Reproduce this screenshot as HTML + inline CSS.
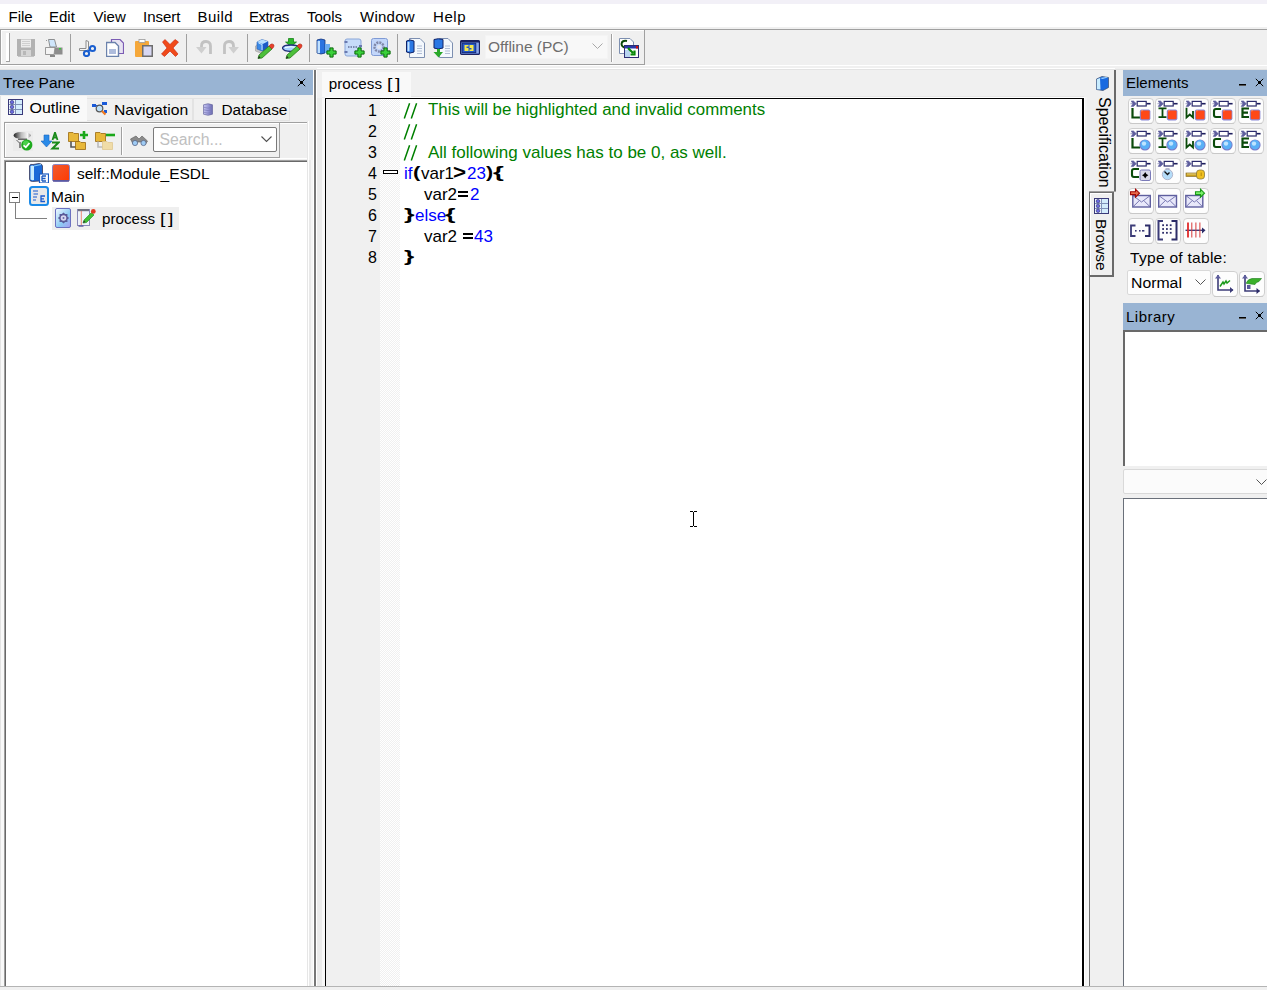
<!DOCTYPE html>
<html><head><meta charset="utf-8">
<style>
html,body{margin:0;padding:0;}
body{width:1267px;height:990px;overflow:hidden;position:relative;background:#f0f0f0;font-family:"Liberation Sans",sans-serif;color:#000;}
.a{position:absolute;}
.t{position:absolute;white-space:pre;line-height:1;}
.ln{left:337px;width:40px;text-align:right;font-size:16px}
.cd{font-size:17px}
.b{font-size:17px;font-weight:bold;transform-origin:0 0}
.hdr{position:absolute;background:#99b4d3;}
</style></head><body>
<!-- top strip -->
<div class="a" style="left:0;top:0;width:1267px;height:4px;background:#f2f0f7"></div>
<!-- menubar -->
<div class="a" style="left:0;top:4px;width:1267px;height:23px;background:#fff"></div>
<div class="t" style="left:8.5px;top:9px;font-size:15px">File</div>
<div class="t" style="left:49px;top:9px;font-size:15px">Edit</div>
<div class="t" style="left:93.5px;top:9px;font-size:15px">View</div>
<div class="t" style="left:143px;top:9px;font-size:15px">Insert</div>
<div class="t" style="left:197.5px;top:9px;font-size:15px;letter-spacing:0.45px">Build</div>
<div class="t" style="left:249px;top:9px;font-size:15px;letter-spacing:-0.45px">Extras</div>
<div class="t" style="left:307px;top:9px;font-size:15px">Tools</div>
<div class="t" style="left:360px;top:9px;font-size:15px;letter-spacing:0.25px">Window</div>
<div class="t" style="left:433px;top:9px;font-size:15px;letter-spacing:0.55px">Help</div>

<!-- toolbar row -->
<div class="a" style="left:0;top:29px;width:1267px;height:1px;background:#a0a0a0"></div>
<div class="a" style="left:0;top:65px;width:1267px;height:1px;background:#fff"></div>
<div class="a" style="left:0;top:69px;width:1267px;height:1px;background:#e3e3e3"></div>
<div class="a" style="left:0;top:29px;width:643px;height:34px;border:1px solid #a0a0a0;border-top-color:#a0a0a0;background:#f0f0f0;box-shadow:inset 1px 1px 0 #fff"></div>
<div class="a" style="left:6px;top:33px;width:3px;height:28px;background:#fff;border-right:1px solid #a0a0a0;border-bottom:1px solid #a0a0a0"></div>

<!-- TOOLBAR ICONS -->
<div class="a" style="left:70px;top:34px;width:1px;height:28px;background:#a0a0a0"></div>
<div class="a" style="left:186px;top:34px;width:1px;height:28px;background:#a0a0a0"></div>
<div class="a" style="left:247px;top:34px;width:1px;height:28px;background:#a0a0a0"></div>
<div class="a" style="left:309px;top:34px;width:1px;height:28px;background:#a0a0a0"></div>
<div class="a" style="left:397px;top:34px;width:1px;height:28px;background:#a0a0a0"></div>
<div class="a" style="left:611px;top:34px;width:1px;height:28px;background:#a0a0a0"></div>
<!-- save -->
<svg class="a" style="left:17px;top:39px" width="18" height="18" viewBox="0 0 18 18">
<rect x="0" y="0" width="18" height="17" fill="#b2b2b2"/>
<rect x="4" y="0.5" width="10" height="8" fill="#ececec"/>
<rect x="5" y="2" width="8" height="1" fill="#cfcfcf"/><rect x="5" y="4" width="8" height="1" fill="#cfcfcf"/><rect x="5" y="6" width="8" height="1" fill="#cfcfcf"/>
<rect x="4" y="11" width="10" height="6" fill="#d6d6d6"/><rect x="6" y="12" width="3" height="4" fill="#b8b8b8"/>
<rect x="1" y="17" width="16" height="1" fill="#c4c4c4"/>
</svg>
<!-- print -->
<svg class="a" style="left:45px;top:39px" width="18" height="18" viewBox="0 0 18 18">
<rect x="1" y="1" width="1" height="1" fill="#999"/>
<path d="M3.5 0.5 H9.5 L11.5 8 H5 Z" fill="#cfe6fb" stroke="#777" stroke-width="0.8"/>
<path d="M0.5 8.5 H17.5 V15.5 H0.5 Z" fill="#8d8d8d"/>
<path d="M0.5 8.5 H10 L9 15.5 H0.5 Z" fill="#f4f4f4" stroke="#8a8a8a" stroke-width="0.8"/>
<rect x="14" y="9" width="2" height="1.5" fill="#3c3"/>
<rect x="5" y="16" width="5" height="2" fill="#888"/>
</svg>
<!-- cut -->
<svg class="a" style="left:79px;top:40px" width="18" height="17" viewBox="0 0 18 17">
<path d="M7 0.5 V8.5 H0.5 V10.5 H8 L9.5 9 V1.5 Z" fill="#f4f4f4" stroke="#8c8c8c" stroke-width="1"/>
<circle cx="7.5" cy="13.5" r="2.6" fill="none" stroke="#1a5fd0" stroke-width="2"/>
<circle cx="13.5" cy="8.5" r="2.6" fill="none" stroke="#1a5fd0" stroke-width="2"/>
<path d="M9 11 L11 10" stroke="#1a5fd0" stroke-width="2"/>
</svg>
<!-- copy -->
<svg class="a" style="left:106px;top:39px" width="18" height="18" viewBox="0 0 18 18">
<path d="M5.5 0.5 H14 L17.5 4 V14.5 H5.5 Z" fill="#e8e4f2" stroke="#7b5cb4" stroke-width="1.2"/>
<path d="M0.5 3.5 H9 L12.5 7 V17.5 H0.5 Z" fill="#fff" stroke="#6b82ac" stroke-width="1.4"/>
<rect x="3" y="10" width="7" height="5" fill="#aebcdc"/>
</svg>
<!-- paste -->
<svg class="a" style="left:135px;top:39px" width="18" height="18" viewBox="0 0 18 18">
<rect x="0" y="2" width="14" height="16" rx="1" fill="#f5a83a"/>
<rect x="4" y="0.5" width="6" height="3" fill="#fff" stroke="#999" stroke-width="0.8"/>
<rect x="7" y="6" width="11" height="12" fill="#6d6d6d"/>
<rect x="8.5" y="7.5" width="8" height="9" fill="#d7d7f2"/>
</svg>
<!-- delete -->
<svg class="a" style="left:161px;top:39px" width="18" height="18" viewBox="0 0 18 18">
<path d="M1.5 3 L4 0.5 L9 5.5 L14 0.5 L17.5 3 L12 9 L17 15 L14.5 17.5 L9 12 L3.5 17.5 L0.5 15 L6 9 Z" fill="#f04a1a" stroke="#c8200a" stroke-width="0.6"/>
</svg>
<!-- undo -->
<svg class="a" style="left:195px;top:40px" width="18" height="15" viewBox="0 0 18 15">
<path d="M15.5 14 V6 Q15.5 1.5 11 1.5 Q6.5 1.5 6.5 6 V8" fill="none" stroke="#c2c2c2" stroke-width="2.8"/>
<path d="M1 7 L6.5 13.5 L11.5 7 Z" fill="#cfcfcf"/>
</svg>
<!-- redo -->
<svg class="a" style="left:222px;top:40px" width="18" height="15" viewBox="0 0 18 15">
<path d="M2.5 14 V6 Q2.5 1.5 7 1.5 Q11.5 1.5 11.5 6 V8" fill="none" stroke="#c2c2c2" stroke-width="2.8"/>
<path d="M17 7 L11.5 13.5 L6.5 7 Z" fill="#cfcfcf"/>
</svg>
<!-- cube+pencil 1 -->
<svg class="a" style="left:255px;top:39px" width="20" height="20" viewBox="0 0 20 20">
<path d="M0.5 7 L3 5 H9 L13 8 V13 L8 15 L0.5 12 Z" fill="#c4c4c4" stroke="#9a9a9a" stroke-width="0.6"/>
<path d="M2 3 L7 0.5 L13 2.5 V9.5 L7 12 L2 10 Z" fill="#3a8ae8" stroke="#2a5ab0" stroke-width="0.6"/>
<path d="M2 3 L7 0.5 L13 2.5 L8 5 Z" fill="#b8e0ff"/>
<path d="M8 5 L13 2.5 V9.5 L8 12 Z" fill="#1a5ac8"/>
<path d="M3.5 4 L7 5.5 V11" fill="none" stroke="#e8f4ff" stroke-width="0.8"/>
<path d="M3 19.5 L4 16 L14 7 L17 10 L7 19 Z" fill="#4cc03a" stroke="#2a7a1a" stroke-width="0.8"/>
<path d="M3 19.5 L4 17 L5.5 18.5 Z" fill="#222"/>
<path d="M14 7 L16 5 Q18 4.5 19 6 Q19.5 8 17 10 Z" fill="#e8402a" stroke="#a02010" stroke-width="0.5"/>
</svg>
<!-- cube+pencil 2 -->
<svg class="a" style="left:282px;top:38px" width="21" height="21" viewBox="0 0 21 21">
<path d="M6.5 0.5 H11.5 V4 H14.5 L9 8.5 L3.5 4 H6.5 Z" fill="#2ab82a" stroke="#0a7a0a" stroke-width="0.7"/>
<path d="M0.5 10 Q1 7 9 7 Q17 7 17.5 10 Q17 13 9 13.5 Q1 13 0.5 10 Z" fill="#a8d4ff" stroke="#22307a" stroke-width="1.3"/>
<path d="M3 9.5 Q9 8 15 9.5" stroke="#fff" stroke-width="1" fill="none"/>
<path d="M4 20.5 L5 17 L15 8 L18 11 L8 20 Z" fill="#4cc03a" stroke="#2a7a1a" stroke-width="0.8"/>
<path d="M4 20.5 L5 18 L6.5 19.5 Z" fill="#222"/>
<path d="M15 8 L17 6 Q19 5.5 20 7 Q20.5 9 18 11 Z" fill="#e8402a" stroke="#a02010" stroke-width="0.5"/>
</svg>
<!-- cylinder + -->
<svg class="a" style="left:316px;top:38px" width="21" height="20" viewBox="0 0 21 20">
<path d="M1 2 Q5 0 9 2 V15 Q5 17 1 15 Z" fill="#2a72e0" stroke="#16357a" stroke-width="0.8"/>
<path d="M1.5 3 Q2.5 2.5 4 3 V15 Q2.5 15.5 1.5 15 Z" fill="#bfe0ff"/>
<rect x="9" y="6" width="5" height="9" fill="#6aaaf0"/>
<path d="M13.9 9.9 H17.1 V12.9 H20.1 V16.1 H17.1 V19.1 H13.9 V16.1 H10.9 V12.9 H13.9 Z" fill="#3ad03a" stroke="#0a6a0a" stroke-width="1"/>
</svg>
<!-- module + -->
<svg class="a" style="left:344px;top:38px" width="21" height="20" viewBox="0 0 21 20">
<rect x="1" y="1" width="16" height="17" rx="2" fill="#c7dcfa" stroke="#8aa6d8" stroke-width="1"/>
<rect x="0.5" y="3" width="3" height="2" fill="#6a7ab0"/><rect x="0.5" y="13" width="3" height="2" fill="#6a7ab0"/>
<rect x="15" y="7" width="3" height="2" fill="#6a7ab0"/>
<path d="M4 9 H14" stroke="#333b6a" stroke-width="1.2" stroke-dasharray="1.5 1"/>
<path d="M13.9 9.9 H17.1 V12.9 H20.1 V16.1 H17.1 V19.1 H13.9 V16.1 H10.9 V12.9 H13.9 Z" fill="#3ad03a" stroke="#0a6a0a" stroke-width="1"/>
</svg>
<!-- gear + -->
<svg class="a" style="left:371px;top:38px" width="20" height="20" viewBox="0 0 20 20">
<rect x="0.5" y="0.5" width="16" height="17" rx="2" fill="#c2d6fa" stroke="#7f9ad4" stroke-width="1"/>
<circle cx="8" cy="9" r="4.5" fill="none" stroke="#8088a8" stroke-width="2.4" stroke-dasharray="2 1"/>
<circle cx="8" cy="9" r="2" fill="#e0e4f0"/>
<path d="M12.9 9.9 H16.1 V12.9 H19.1 V16.1 H16.1 V19.1 H12.9 V16.1 H9.9 V12.9 H12.9 Z" fill="#3ad03a" stroke="#0a6a0a" stroke-width="1"/>
</svg>
<!-- doc+cyl -->
<svg class="a" style="left:406px;top:38px" width="20" height="20" viewBox="0 0 20 20">
<path d="M3.5 0.5 H14 L18.5 5 V19.5 H3.5 Z" fill="#f4f8fd" stroke="#7d8fb0" stroke-width="1"/>
<path d="M11 8 H16 M11 10.5 H16 M11 13 H16 M11 15.5 H16" stroke="#b0bcd4" stroke-width="1"/>
<path d="M0.5 3 Q4 1 8 3 V14 Q4 16 0.5 14 Z" fill="#2b78e4" stroke="#122266" stroke-width="1"/>
<path d="M1.5 4 Q2.5 3.5 3.5 4 V13 Q2.5 13.5 1.5 13 Z" fill="#c6e4ff"/>
</svg>
<!-- doc+cyl+arrow -->
<svg class="a" style="left:433px;top:38px" width="20" height="20" viewBox="0 0 20 20">
<path d="M6.5 0.5 H15 L19.5 5 V19.5 H6.5 Z" fill="#f4f8fd" stroke="#7d8fb0" stroke-width="1"/>
<path d="M12 8 H17 M12 10.5 H17 M12 13 H17 M12 15.5 H17" stroke="#b0bcd4" stroke-width="1"/>
<path d="M1 1.5 Q5 0 10 1.5 V10 Q5 12 1 10 Z" fill="#2b78e4" stroke="#122266" stroke-width="1"/>
<path d="M4 11 H7 V14 H10 L5.5 19.5 L0.5 14 H4 Z" fill="#2aa82a"/>
</svg>
<!-- monitor -->
<svg class="a" style="left:460px;top:40px" width="20" height="15" viewBox="0 0 20 15">
<rect x="0.6" y="0.6" width="18.8" height="13.8" rx="1" fill="#6a8ad8" stroke="#1a2260" stroke-width="1.2"/>
<rect x="0.6" y="0.6" width="18.8" height="1.8" fill="#1a2260"/>
<rect x="2.2" y="3.2" width="13.6" height="9.4" fill="#2458c8" stroke="#142a78" stroke-width="0.9"/>
<path d="M4.5 5 H8.5 V6.5 H6.5 V8 H8.5 V11 H4.5 Z M9.5 5 H13.5 V11 H9.5 V9.5 H11.5 V8 H9.5 Z" fill="#f6e84a"/>
<rect x="16.6" y="3" width="2" height="10" fill="#8aa8e8"/>
</svg>
<!-- combo Offline -->
<div class="a" style="left:485px;top:35px;width:121px;height:22px;background:#f8f8f8;border:1px solid #f4f4f4"></div>
<div class="t" style="left:488px;top:39px;font-size:15.5px;color:#6d6d6d">Offline (PC)</div>
<svg class="a" style="left:592px;top:43px" width="11" height="7" viewBox="0 0 11 7"><path d="M0.5 0.5 L5.5 5.5 L10.5 0.5" fill="none" stroke="#a8a8a8" stroke-width="1"/></svg>
<div class="a" style="left:612px;top:34px;width:1px;height:28px;background:#fff"></div>
<!-- last icon -->
<svg class="a" style="left:619px;top:38px" width="20" height="20" viewBox="0 0 20 20">
<path d="M0.5 0.5 H11 L14.5 4 V15.5 H0.5 Z" fill="#fff" stroke="#7d8fb0" stroke-width="1"/>
<path d="M8 3 Q3 2 2.5 6 Q3 10 8 9.5" fill="none" stroke="#0a4a0a" stroke-width="2"/>
<rect x="5.5" y="7.5" width="14" height="12" fill="#fff" stroke="#2e2e74" stroke-width="1"/>
<rect x="6" y="8" width="13" height="2.5" fill="#2a3aa8"/><rect x="17" y="8" width="2" height="2.5" fill="#d01010"/>
<path d="M6 12 H11 V19 H6 Z" fill="#b8d4f0"/>
<path d="M9 10 L14 15 M11.5 16.5 H15.5 V12.5" stroke="#0a8a0a" stroke-width="2.2" fill="none"/>
</svg>

<!-- tree pane -->
<div class="hdr" style="left:0;top:70px;width:313px;height:25px"></div>
<div class="t" style="left:3px;top:75px;font-size:15.5px">Tree Pane</div>

<!-- splitter -->
<div class="a" style="left:313px;top:70px;width:1px;height:916px;background:#fff"></div>
<div class="a" style="left:314px;top:70px;width:2px;height:916px;background:#777"></div>
<div class="a" style="left:316px;top:70px;width:1px;height:916px;background:#fff"></div>

<!-- tabs -->
<div class="a" style="left:0;top:96px;width:87px;height:25px;background:#f9f9f9"></div>
<div class="t" style="left:29.5px;top:99.86px;font-size:16px;transform:scaleY(0.9);transform-origin:0 13.54px">Outline</div>

<!-- tool group -->
<div class="a" style="left:4px;top:122px;width:305px;height:37px;background:#fff"></div><div class="a" style="left:4px;top:122px;width:304px;height:36px;background:#f0f0f0;border-top:1px solid #a0a0a0;border-left:1px solid #a0a0a0;box-sizing:border-box"></div><div class="a" style="left:5px;top:123px;width:303px;height:1px;background:#fff"></div><div class="a" style="left:5px;top:123px;width:1px;height:34px;background:#fff"></div><div class="a" style="left:4px;top:157px;width:276px;height:1px;background:#a0a0a0"></div>

<!-- tree box -->
<div class="a" style="left:0;top:121px;width:1px;height:865px;background:#e3e3e3"></div><div class="a" style="left:1px;top:121px;width:3px;height:865px;background:#f9f9f9"></div><div class="a" style="left:4px;top:160px;width:303px;height:826px;border-left:1px solid #a0a0a0;border-top:1px solid #a0a0a0;background:#fff;box-shadow:inset 1px 1px 0 #696969"></div>
<div class="a" style="left:52px;top:207px;width:127px;height:23px;background:#efefef"></div>

<!-- TREE PANE DETAILS -->
<svg class="a" style="left:297px;top:78px" width="9" height="9" viewBox="0 0 9 9"><path d="M0.8 0.8 L8.2 8.2 M8.2 0.8 L0.8 8.2" stroke="#000" stroke-width="1"/><rect x="3" y="3" width="3" height="3" fill="#000"/></svg>
<!-- tab borders -->
<div class="a" style="left:0;top:96px;width:1px;height:25px;background:#e2e2e2"></div>
<div class="a" style="left:87px;top:98px;width:105px;height:21px;border:1px solid #e3e3e3;border-left:none;background:#f0f0f0"></div>
<div class="a" style="left:193px;top:98px;width:95px;height:21px;border:1px solid #e3e3e3;border-left:1px solid #e3e3e3;background:#f0f0f0"></div>
<!-- outline icon -->
<svg class="a" style="left:8px;top:99px" width="15" height="16" viewBox="0 0 15 16"><rect x="0.5" y="0.5" width="14" height="15" fill="#d4ecfc" stroke="#3a3a7a" stroke-width="1"/><rect x="1" y="1" width="6" height="14" fill="#f0f8ff"/><path d="M7.5 1 V15 M1 5.5 H14 M1 10.5 H14" stroke="#8090b8" stroke-width="1"/><circle cx="4" cy="3.2" r="1.8" fill="#6a6ae0" stroke="#2a2a70" stroke-width="0.6"/><circle cx="4" cy="8" r="1.8" fill="#6a6ae0" stroke="#2a2a70" stroke-width="0.6"/><circle cx="4" cy="12.8" r="1.8" fill="#6a6ae0" stroke="#2a2a70" stroke-width="0.6"/></svg>
<!-- navigation icon -->
<svg class="a" style="left:92px;top:102px" width="16" height="14" viewBox="0 0 16 14">
<rect x="0" y="2" width="4" height="3" fill="#1a5ad8"/><rect x="10" y="0" width="5" height="3" fill="#1a5ad8"/><rect x="12" y="8" width="3" height="3" fill="#1a5ad8"/>
<path d="M4 3.5 H10" stroke="#1a5ad8" stroke-width="1"/>
<circle cx="7.5" cy="6.5" r="3.3" fill="#bfe0f8" stroke="#555" stroke-width="1.2"/>
<path d="M10 9 L13.5 12.5" stroke="#f07a20" stroke-width="2.2"/>
</svg>
<div class="t" style="left:114px;top:101.71px;font-size:15.7px;transform:scaleY(0.9);transform-origin:0 13.29px">Navigation</div>
<!-- database icon -->
<svg class="a" style="left:203px;top:102.5px" width="10" height="13" viewBox="0 0 10 13">
<defs><linearGradient id="dbg" x1="0" y1="0" x2="1" y2="0"><stop offset="0" stop-color="#c8c8f0"/><stop offset="0.5" stop-color="#9a9ad8"/><stop offset="1" stop-color="#6a6ab0"/></linearGradient></defs>
<path d="M0.5 1.8 Q5 -0.3 9.5 1.8 V11.2 Q5 13.3 0.5 11.2 Z" fill="url(#dbg)" stroke="#6a6aa0" stroke-width="0.7"/>
<path d="M0.8 4.3 Q5 6 9.2 4.3 M0.8 6.8 Q5 8.5 9.2 6.8 M0.8 9.3 Q5 11 9.2 9.3" fill="none" stroke="#7a7ab8" stroke-width="0.7"/>
</svg>
<div class="t" style="left:221.5px;top:101.5px;font-size:15.4px">Database</div>
<!-- tool group icons -->
<svg class="a" style="left:13px;top:131px" width="20" height="20" viewBox="0 0 20 20">
<rect x="0" y="0" width="20" height="20" fill="#ebebeb"/>
<defs><linearGradient id="fg" x1="0" y1="0" x2="1" y2="0"><stop offset="0" stop-color="#222"/><stop offset="0.45" stop-color="#bbb"/><stop offset="0.8" stop-color="#f4f4f4"/><stop offset="1" stop-color="#888"/></linearGradient></defs>
<path d="M0.5 4.5 Q1 1 8 1 Q17 1 18 4.5 Q17 7.5 9 8 Q1 7.5 0.5 4.5 Z" fill="url(#fg)"/>
<rect x="5" y="7.5" width="9" height="1.5" fill="#666"/>
<path d="M3.5 9 L6.5 12" stroke="#555" stroke-width="0.9"/>
<rect x="6" y="11" width="2" height="6" fill="#888"/>
<circle cx="13.8" cy="14" r="5.6" fill="#1eaa1e"/>
<circle cx="13" cy="12.5" r="3" fill="#4ad04a"/>
<path d="M10.5 14.3 L12.8 16.2 L16.5 12" fill="none" stroke="#fff" stroke-width="1.7"/>
</svg>
<svg class="a" style="left:41px;top:132px" width="19" height="18" viewBox="0 0 19 18">
<path d="M3 3 H8 V9 H11 L5.5 15 L0 9 H3 Z" fill="#2a8ae8" stroke="#1a64c0" stroke-width="0.6"/>
<path d="M11.5 8 L14 0.5 L16.5 8 M12.5 5.5 H15.5" fill="none" stroke="#1a8a1a" stroke-width="1.8"/>
<path d="M11 10.5 H17.5 L11.5 16.5 H18" fill="none" stroke="#1a8a1a" stroke-width="2"/>
</svg>
<svg class="a" style="left:68px;top:131px" width="21" height="19" viewBox="0 0 21 19">
<path d="M0.5 1.5 H5 L6 2.5 H10.5 V10.5 H0.5 Z" fill="#e8b83a" stroke="#9a6a10" stroke-width="0.8"/>
<path d="M3 10.5 V16 H8" fill="none" stroke="#555" stroke-width="1.6"/>
<path d="M7.5 10.5 H12 L13 11.5 H17.5 V18.5 H7.5 Z" fill="#e8b83a" stroke="#9a6a10" stroke-width="0.8"/>
<path d="M12 4 H20 M16 0 V8" stroke="#1aa81a" stroke-width="2.6"/>
</svg>
<svg class="a" style="left:95px;top:131px" width="20" height="19" viewBox="0 0 20 19">
<path d="M0.5 1.5 H5 L6 2.5 H10.5 V10.5 H0.5 Z" fill="#e8b83a" stroke="#9a6a10" stroke-width="0.8"/>
<path d="M3 10.5 V16 H8" fill="none" stroke="#bbb" stroke-width="1.6"/>
<path d="M7.5 10.5 H12 L13 11.5 H17.5 V18.5 H7.5 Z" fill="#f0dca8" stroke="#e0c890" stroke-width="0.8"/>
<path d="M11 4 H20" stroke="#1aa81a" stroke-width="2.6"/>
</svg>
<div class="a" style="left:121px;top:127px;width:1px;height:28px;background:#a0a0a0"></div>
<div class="a" style="left:122px;top:127px;width:1px;height:28px;background:#fff"></div>
<svg class="a" style="left:130px;top:135px" width="18" height="12" viewBox="0 0 18 12">
<path d="M0.5 4 L6 1 L9 4 L12 1 L17.5 6 L15 10 L11 7 L7 7 L3 9 Z" fill="#8a8a8a" stroke="#5a5a5a" stroke-width="0.6"/>
<circle cx="5" cy="8" r="2.6" fill="#9ecbf4" stroke="#5a6a8a" stroke-width="0.8"/>
<circle cx="13.5" cy="8" r="2.6" fill="#9ecbf4" stroke="#5a6a8a" stroke-width="0.8"/>
</svg>
<div class="a" style="left:279px;top:123px;width:1px;height:34px;background:#a0a0a0"></div>
<!-- search combo -->
<div class="a" style="left:153px;top:127px;width:122px;height:23px;border:1px solid #7a7a7a;border-radius:2px;background:#fff"></div>
<div class="t" style="left:159.5px;top:131.5px;font-size:15.8px;color:#c0c0c0">Search...</div>
<svg class="a" style="left:261px;top:136px" width="11" height="7" viewBox="0 0 11 7"><path d="M0.5 0.5 L5.5 5.5 L10.5 0.5" fill="none" stroke="#505050" stroke-width="1.1"/></svg>
<!-- tree icons -->
<svg class="a" style="left:29px;top:163px" width="20" height="20" viewBox="0 0 20 20">
<path d="M0.5 3 Q1 0.5 4 1.5 L10 0.5 Q13 0.5 13.5 3 V17 Q13 18.5 10.5 18 L3.5 18.5 Q0.5 18.5 0.5 16 Z" fill="#1a6ad8" stroke="#3a3a5a" stroke-width="0.8"/>
<path d="M1.5 3 Q3 2 5 3 V17 Q3 17.5 1.5 16.5 Z" fill="#c8ecff"/>
<path d="M5 3 L12 1.5" stroke="#8ad0ff" stroke-width="1.2"/>
<rect x="10.5" y="11" width="9" height="9" fill="#fff" stroke="#1a5ac0" stroke-width="1.2"/>
<path d="M13 13 H17 M13 15.5 H16.5 M13 18 H17 M13 13 V18" stroke="#1a5ac0" stroke-width="1.3"/>
</svg>
<svg class="a" style="left:52px;top:164px" width="18" height="18" viewBox="0 0 18 18">
<defs><linearGradient id="rg" x1="0" y1="0" x2="1" y2="1"><stop offset="0" stop-color="#f05a30"/><stop offset="1" stop-color="#ff3a00"/></linearGradient></defs>
<rect x="0.5" y="0.5" width="17" height="17" rx="2" fill="url(#rg)" stroke="#8a86c8" stroke-width="1"/>
<rect x="1" y="16" width="16" height="1.5" fill="#5a5aa0"/>
</svg>
<div class="t" style="left:77px;top:166px;font-size:15.5px">self::Module_ESDL</div>
<!-- minus box -->
<div class="a" style="left:9px;top:192px;width:9px;height:9px;border:1px solid #808080;background:#fff"></div>
<div class="a" style="left:12px;top:197px;width:6px;height:1px;background:#000"></div>
<div class="a" style="left:15px;top:203px;width:1px;height:16px;background:#808080"></div>
<div class="a" style="left:15px;top:218px;width:32px;height:1px;background:#808080"></div>
<svg class="a" style="left:29px;top:186px" width="20" height="20" viewBox="0 0 20 20">
<rect x="1" y="1" width="18" height="18" rx="2.5" fill="#e8e8e8" stroke="#1a8ae8" stroke-width="2"/>
<path d="M4 5 H9 M4.5 8 H9 M4 11 H8 M4 14 H7" stroke="#1a5ad0" stroke-width="1.2"/>
<path d="M16 10 H12 V15.5 H16 M12 12.8 H15" fill="none" stroke="#1a5ad0" stroke-width="1.3"/>
</svg>
<div class="t" style="left:51px;top:189px;font-size:15.5px">Main</div>
<!-- process item -->
<svg class="a" style="left:55px;top:208px" width="16" height="20" viewBox="0 0 16 20">
<defs><linearGradient id="bg1" x1="0" y1="0" x2="1" y2="1"><stop offset="0" stop-color="#f4fbff"/><stop offset="0.6" stop-color="#8ccaf4"/><stop offset="1" stop-color="#a89af0"/></linearGradient></defs>
<rect x="0.5" y="0.5" width="15" height="19" rx="1.5" fill="url(#bg1)" stroke="#6a70c0" stroke-width="1"/>
<path d="M8.50 4.40 L10.11 6.12 L12.46 6.04 L12.38 8.39 L14.10 10.00 L12.38 11.61 L12.46 13.96 L10.11 13.88 L8.50 15.60 L6.89 13.88 L4.54 13.96 L4.62 11.61 L2.90 10.00 L4.62 8.39 L4.54 6.04 L6.89 6.12 Z" fill="#5a5a98"/>
<circle cx="8.5" cy="10" r="2.8" fill="#d8d8f0"/>
<circle cx="8.5" cy="10" r="1" fill="#6a6aa8"/>
</svg>
<svg class="a" style="left:77px;top:208px" width="19" height="19" viewBox="0 0 19 19">
<rect x="0.5" y="1.5" width="12" height="16" fill="#eef2fa" stroke="#8a8ab8" stroke-width="1"/>
<rect x="1" y="1" width="11" height="2.2" fill="#707080"/>
<path d="M4.3 3 V17" stroke="#f07050" stroke-width="0.8"/>
<rect x="1.5" y="17" width="5" height="1.8" fill="#6a6aa8"/>
<path d="M6 15 L7 12 L14.5 4.5 L17 7 L9.5 14.5 Z" fill="#40c030" stroke="#1a8a1a" stroke-width="0.6"/>
<path d="M6 15 L7 12.5 L8.5 14 Z" fill="#333"/>
<circle cx="16.3" cy="3.4" r="2.4" fill="#e03a20"/>
</svg>
<div class="t" style="left:102px;top:210.60px;font-size:15.2px">process</div><div class="t" style="left:159.5px;top:210.60px;font-size:15px;letter-spacing:2px;transform:scaleX(1.3);transform-origin:0 0">[]</div>

<!-- editor tab -->
<div class="a" style="left:322px;top:72px;width:89px;height:25px;background:#f9f9f9"></div>
<div class="t" style="left:328.8px;top:76.10px;font-size:15.2px">process</div><div class="t" style="left:386.5px;top:76.10px;font-size:15px;letter-spacing:2px;transform:scaleX(1.3);transform-origin:0 0">[]</div>

<div class="a" style="left:307px;top:121px;width:1px;height:865px;background:#e6e6e6"></div><div class="a" style="left:308px;top:121px;width:1px;height:865px;background:#fff"></div><div class="a" style="left:309px;top:160px;width:2px;height:826px;background:#e9e9e9"></div><div class="a" style="left:311px;top:160px;width:2px;height:826px;background:#f5f5f5"></div><div class="a" style="left:317px;top:98px;width:5px;height:888px;background:#ebebeb"></div><div class="a" style="left:322px;top:98px;width:3px;height:888px;background:#f8f8f8"></div>
<div class="a" style="left:317px;top:68px;width:798px;height:1px;background:#fff"></div><div class="a" style="left:411px;top:96px;width:673px;height:1px;background:#e6e6e6"></div><div class="a" style="left:325px;top:97px;width:759px;height:1px;background:#fff"></div>
<!-- editor -->
<div class="a" style="left:325px;top:98px;width:756px;height:888px;border-left:1px solid #000;border-top:1px solid #000;border-right:2px solid #000;background:#fff"></div>
<div class="a" style="left:326px;top:99px;width:54px;height:887px;background:#f0f0f0"></div>
<div class="a" style="left:380px;top:99px;width:20px;height:887px;background:repeating-conic-gradient(#f0f0f0 0 25%,#fff 0 50%) 0 1px/2px 2px"></div>

<!-- code -->
<div class="t ln" style="top:103px">1</div>
<div class="t ln" style="top:124px">2</div>
<div class="t ln" style="top:145px">3</div>
<div class="t ln" style="top:166px">4</div>
<div class="t ln" style="top:187px">5</div>
<div class="t ln" style="top:208px">6</div>
<div class="t ln" style="top:229px">7</div>
<div class="t ln" style="top:250px">8</div>
<svg class="a" style="left:402px;top:102px" width="18" height="18" viewBox="0 0 18 18"><path d="M2.3 16.5 L7.6 1.3 M9.3 16.5 L14.6 1.3" stroke="#008000" stroke-width="1.5"/></svg>
<div class="t cd" style="left:428px;top:102px;color:#008000;font-size:16.85px;">This will be highlighted and invalid comments</div>
<svg class="a" style="left:402px;top:123px" width="18" height="18" viewBox="0 0 18 18"><path d="M2.3 16.5 L7.6 1.3 M9.3 16.5 L14.6 1.3" stroke="#008000" stroke-width="1.5"/></svg>
<svg class="a" style="left:402px;top:144px" width="18" height="18" viewBox="0 0 18 18"><path d="M2.3 16.5 L7.6 1.3 M9.3 16.5 L14.6 1.3" stroke="#008000" stroke-width="1.5"/></svg>
<div class="t cd" style="left:428px;top:144px;color:#008000;">All following values has to be 0, as well.</div>
<div class="t cd" style="left:404px;top:165px;color:#0000ff;">if</div>
<div class="t b" style="left:412.79px;top:164.00px;transform:scale(1.303,0.982)">(</div>
<div class="t cd" style="left:421px;top:165px;color:#000;">var1</div>
<div class="t b" style="left:453.40px;top:163.20px;transform:scale(1.318,1.176)">&gt;</div>
<div class="t cd" style="left:467px;top:165px;color:#0000ff;">23</div>
<div class="t b" style="left:485.50px;top:164.00px;transform:scale(1.261,0.982)">)</div>
<div class="t b" style="left:492.94px;top:164.00px;transform:scale(1.647,0.982)">{</div>
<div class="t cd" style="left:424px;top:186px;color:#000;">var2</div>
<div class="a" style="left:458px;top:191.2px;width:10.3px;height:1.9px;background:#000"></div><div class="a" style="left:458px;top:195.1px;width:10.3px;height:1.9px;background:#000"></div>
<div class="t cd" style="left:470px;top:186px;color:#0000ff;">2</div>
<div class="t b" style="left:404.26px;top:206.10px;transform:scale(1.597,0.982)">}</div>
<div class="t cd" style="left:415px;top:207px;color:#0000ff;">else</div>
<div class="t b" style="left:445.06px;top:206.10px;transform:scale(1.597,0.982)">{</div>
<div class="t cd" style="left:424px;top:228px;color:#000;">var2</div>
<div class="a" style="left:462.7px;top:233px;width:10.4px;height:1.9px;background:#000"></div><div class="a" style="left:462.7px;top:236.9px;width:10.4px;height:1.9px;background:#000"></div>
<div class="t cd" style="left:474px;top:228px;color:#0000ff;">43</div>
<div class="t b" style="left:404.27px;top:248.10px;transform:scale(1.546,0.982)">}</div>
<!-- fold marker -->
<div class="a" style="left:383px;top:170px;width:13px;height:2px;border:1px solid #000;background:#fff"></div>
<!-- I-beam cursor -->
<div class="a" style="left:690px;top:511px;width:3px;height:1px;background:#000"></div>
<div class="a" style="left:694px;top:511px;width:3px;height:1px;background:#000"></div>
<div class="a" style="left:693px;top:512px;width:1px;height:14px;background:#000"></div>
<div class="a" style="left:690px;top:526px;width:3px;height:1px;background:#000"></div>
<div class="a" style="left:694px;top:526px;width:3px;height:1px;background:#000"></div>

<!-- RIGHT SIDE -->
<!-- side tab strip -->
<div class="a" style="left:1084px;top:97px;width:1px;height:889px;background:#fff"></div><div class="a" style="left:1085px;top:97px;width:2px;height:889px;background:#f3f3f3"></div><div class="a" style="left:1087px;top:276px;width:2px;height:710px;background:#f6f6f6"></div>
<div class="a" style="left:1114px;top:70px;width:2px;height:121px;background:#6a6a6a"></div>
<div class="a" style="left:1089px;top:191px;width:27px;height:1px;background:#a0a0a0"></div>
<div class="a" style="left:1089px;top:192px;width:22px;height:82px;border:1px solid #707070;border-right:2px solid #6a6a6a;border-bottom:2px solid #6a6a6a;background:#f0f0f0;box-shadow:inset 1px 1px 0 #fff"></div>
<div class="a" style="left:1089px;top:276px;width:1px;height:710px;background:#707070"></div>
<svg class="a" style="left:1096px;top:76px" width="13" height="15" viewBox="0 0 13 15">
<path d="M0.5 3 L6 0.5 L12.5 1.5 V11.5 L7 14.5 L0.5 13.5 Z" fill="#1a6ae0" stroke="#3a4a6a" stroke-width="0.7"/>
<path d="M0.8 3.2 L4 2 L4.5 13.5 L0.8 13.2 Z" fill="#c8ecff"/>
<path d="M4 2 L10 1 L12 1.5 L6.5 3" fill="#9ad0ff"/>
</svg>
<div class="t" style="left:1096px;top:97px;font-size:16px;writing-mode:vertical-rl">Specification</div>
<svg class="a" style="left:1094px;top:198px" width="15" height="16" viewBox="0 0 15 16"><rect x="0.5" y="0.5" width="14" height="15" fill="#d4ecfc" stroke="#3a3a7a" stroke-width="1"/><rect x="1" y="1" width="6" height="14" fill="#f0f8ff"/><path d="M7.5 1 V15 M1 5.5 H14 M1 10.5 H14" stroke="#8090b8" stroke-width="1"/><circle cx="4" cy="3.2" r="1.8" fill="#6a6ae0" stroke="#2a2a70" stroke-width="0.6"/><circle cx="4" cy="8" r="1.8" fill="#6a6ae0" stroke="#2a2a70" stroke-width="0.6"/><circle cx="4" cy="12.8" r="1.8" fill="#6a6ae0" stroke="#2a2a70" stroke-width="0.6"/></svg>
<div class="t" style="left:1093px;top:219px;font-size:15.5px;writing-mode:vertical-rl">Browse</div>

<!-- Elements -->
<div class="hdr" style="left:1123px;top:70px;width:144px;height:26px"></div>
<div class="t" style="left:1126px;top:74.5px;font-size:15px">Elements</div>

<!-- ELEMENTS -->
<svg class="a" style="left:1128px;top:98px" width="26" height="26" viewBox="0 0 26 26"><rect x="0.5" y="0.5" width="25" height="25" rx="3.5" fill="#fdfdfd" stroke="#cfcfcf" stroke-width="1"/><path d="M2 25.6 H24" stroke="#c4c4c4" stroke-width="0.8"/><path d="M2.5 5.7 H5 L3.2 3 H5.5 L8.3 5.7 L5.5 8.4 H3.2 L5 5.7" fill="#5e5e9e" stroke="#5e5e9e" stroke-width="0.6"/><rect x="9.2" y="3.4" width="9" height="4.6" fill="#fff" stroke="#2c2c6c" stroke-width="1.2"/><path d="M18.5 5.7 H22.6" stroke="#1e1e5e" stroke-width="1.6"/><path d="M4.5 10 V19.5 H12" fill="none" stroke="#0a4a0a" stroke-width="2.2"/><rect x="11.8" y="11.6" width="10.6" height="10.8" rx="1.8" fill="#8a8ad8"/><rect x="12.8" y="12.4" width="8.8" height="8.8" rx="1.2" fill="#ff4818"/><path d="M13 13 L15 12.6" stroke="#ff8a5a" stroke-width="1"/></svg>
<svg class="a" style="left:1128px;top:128px" width="26" height="26" viewBox="0 0 26 26"><rect x="0.5" y="0.5" width="25" height="25" rx="3.5" fill="#fdfdfd" stroke="#cfcfcf" stroke-width="1"/><path d="M2 25.6 H24" stroke="#c4c4c4" stroke-width="0.8"/><path d="M2.5 5.7 H5 L3.2 3 H5.5 L8.3 5.7 L5.5 8.4 H3.2 L5 5.7" fill="#5e5e9e" stroke="#5e5e9e" stroke-width="0.6"/><rect x="9.2" y="3.4" width="9" height="4.6" fill="#fff" stroke="#2c2c6c" stroke-width="1.2"/><path d="M18.5 5.7 H22.6" stroke="#1e1e5e" stroke-width="1.6"/><path d="M4.5 10 V19.5 H12" fill="none" stroke="#0a4a0a" stroke-width="2.2"/><circle cx="17" cy="17" r="5.6" fill="#7a7ac8"/><circle cx="17" cy="16.8" r="4.7" fill="#5ab0f6"/><circle cx="16" cy="15.6" r="2.2" fill="#bfe4ff"/></svg>
<svg class="a" style="left:1155px;top:98px" width="26" height="26" viewBox="0 0 26 26"><rect x="0.5" y="0.5" width="25" height="25" rx="3.5" fill="#fdfdfd" stroke="#cfcfcf" stroke-width="1"/><path d="M2 25.6 H24" stroke="#c4c4c4" stroke-width="0.8"/><path d="M2.5 5.7 H5 L3.2 3 H5.5 L8.3 5.7 L5.5 8.4 H3.2 L5 5.7" fill="#5e5e9e" stroke="#5e5e9e" stroke-width="0.6"/><rect x="9.2" y="3.4" width="9" height="4.6" fill="#fff" stroke="#2c2c6c" stroke-width="1.2"/><path d="M18.5 5.7 H22.6" stroke="#1e1e5e" stroke-width="1.6"/><path d="M3.5 10.3 H11.5 M7.5 10.3 V19.2 M3.5 19.2 H11.5" fill="none" stroke="#0a4a0a" stroke-width="1.8"/><rect x="11.8" y="11.6" width="10.6" height="10.8" rx="1.8" fill="#8a8ad8"/><rect x="12.8" y="12.4" width="8.8" height="8.8" rx="1.2" fill="#ff4818"/><path d="M13 13 L15 12.6" stroke="#ff8a5a" stroke-width="1"/></svg>
<svg class="a" style="left:1155px;top:128px" width="26" height="26" viewBox="0 0 26 26"><rect x="0.5" y="0.5" width="25" height="25" rx="3.5" fill="#fdfdfd" stroke="#cfcfcf" stroke-width="1"/><path d="M2 25.6 H24" stroke="#c4c4c4" stroke-width="0.8"/><path d="M2.5 5.7 H5 L3.2 3 H5.5 L8.3 5.7 L5.5 8.4 H3.2 L5 5.7" fill="#5e5e9e" stroke="#5e5e9e" stroke-width="0.6"/><rect x="9.2" y="3.4" width="9" height="4.6" fill="#fff" stroke="#2c2c6c" stroke-width="1.2"/><path d="M18.5 5.7 H22.6" stroke="#1e1e5e" stroke-width="1.6"/><path d="M3.5 10.3 H11.5 M7.5 10.3 V19.2 M3.5 19.2 H11.5" fill="none" stroke="#0a4a0a" stroke-width="1.8"/><circle cx="17" cy="17" r="5.6" fill="#7a7ac8"/><circle cx="17" cy="16.8" r="4.7" fill="#5ab0f6"/><circle cx="16" cy="15.6" r="2.2" fill="#bfe4ff"/></svg>
<svg class="a" style="left:1183px;top:98px" width="26" height="26" viewBox="0 0 26 26"><rect x="0.5" y="0.5" width="25" height="25" rx="3.5" fill="#fdfdfd" stroke="#cfcfcf" stroke-width="1"/><path d="M2 25.6 H24" stroke="#c4c4c4" stroke-width="0.8"/><path d="M2.5 5.7 H5 L3.2 3 H5.5 L8.3 5.7 L5.5 8.4 H3.2 L5 5.7" fill="#5e5e9e" stroke="#5e5e9e" stroke-width="0.6"/><rect x="9.2" y="3.4" width="9" height="4.6" fill="#fff" stroke="#2c2c6c" stroke-width="1.2"/><path d="M18.5 5.7 H22.6" stroke="#1e1e5e" stroke-width="1.6"/><path d="M3.5 9.8 V19.5 L6.8 16.5 L10 19.5 V13" fill="none" stroke="#0a4a0a" stroke-width="1.8"/><rect x="11.8" y="11.6" width="10.6" height="10.8" rx="1.8" fill="#8a8ad8"/><rect x="12.8" y="12.4" width="8.8" height="8.8" rx="1.2" fill="#ff4818"/><path d="M13 13 L15 12.6" stroke="#ff8a5a" stroke-width="1"/></svg>
<svg class="a" style="left:1183px;top:128px" width="26" height="26" viewBox="0 0 26 26"><rect x="0.5" y="0.5" width="25" height="25" rx="3.5" fill="#fdfdfd" stroke="#cfcfcf" stroke-width="1"/><path d="M2 25.6 H24" stroke="#c4c4c4" stroke-width="0.8"/><path d="M2.5 5.7 H5 L3.2 3 H5.5 L8.3 5.7 L5.5 8.4 H3.2 L5 5.7" fill="#5e5e9e" stroke="#5e5e9e" stroke-width="0.6"/><rect x="9.2" y="3.4" width="9" height="4.6" fill="#fff" stroke="#2c2c6c" stroke-width="1.2"/><path d="M18.5 5.7 H22.6" stroke="#1e1e5e" stroke-width="1.6"/><path d="M3.5 9.8 V19.5 L6.8 16.5 L10 19.5 V13" fill="none" stroke="#0a4a0a" stroke-width="1.8"/><circle cx="17" cy="17" r="5.6" fill="#7a7ac8"/><circle cx="17" cy="16.8" r="4.7" fill="#5ab0f6"/><circle cx="16" cy="15.6" r="2.2" fill="#bfe4ff"/></svg>
<svg class="a" style="left:1210px;top:98px" width="26" height="26" viewBox="0 0 26 26"><rect x="0.5" y="0.5" width="25" height="25" rx="3.5" fill="#fdfdfd" stroke="#cfcfcf" stroke-width="1"/><path d="M2 25.6 H24" stroke="#c4c4c4" stroke-width="0.8"/><path d="M2.5 5.7 H5 L3.2 3 H5.5 L8.3 5.7 L5.5 8.4 H3.2 L5 5.7" fill="#5e5e9e" stroke="#5e5e9e" stroke-width="0.6"/><rect x="9.2" y="3.4" width="9" height="4.6" fill="#fff" stroke="#2c2c6c" stroke-width="1.2"/><path d="M18.5 5.7 H22.6" stroke="#1e1e5e" stroke-width="1.6"/><path d="M11 11 H6 Q4 11 4 13 V17 Q4 19 6 19 H11" fill="none" stroke="#0a4a0a" stroke-width="2.1"/><rect x="11.8" y="11.6" width="10.6" height="10.8" rx="1.8" fill="#8a8ad8"/><rect x="12.8" y="12.4" width="8.8" height="8.8" rx="1.2" fill="#ff4818"/><path d="M13 13 L15 12.6" stroke="#ff8a5a" stroke-width="1"/></svg>
<svg class="a" style="left:1210px;top:128px" width="26" height="26" viewBox="0 0 26 26"><rect x="0.5" y="0.5" width="25" height="25" rx="3.5" fill="#fdfdfd" stroke="#cfcfcf" stroke-width="1"/><path d="M2 25.6 H24" stroke="#c4c4c4" stroke-width="0.8"/><path d="M2.5 5.7 H5 L3.2 3 H5.5 L8.3 5.7 L5.5 8.4 H3.2 L5 5.7" fill="#5e5e9e" stroke="#5e5e9e" stroke-width="0.6"/><rect x="9.2" y="3.4" width="9" height="4.6" fill="#fff" stroke="#2c2c6c" stroke-width="1.2"/><path d="M18.5 5.7 H22.6" stroke="#1e1e5e" stroke-width="1.6"/><path d="M11 11 H6 Q4 11 4 13 V17 Q4 19 6 19 H11" fill="none" stroke="#0a4a0a" stroke-width="2.1"/><circle cx="17" cy="17" r="5.6" fill="#7a7ac8"/><circle cx="17" cy="16.8" r="4.7" fill="#5ab0f6"/><circle cx="16" cy="15.6" r="2.2" fill="#bfe4ff"/></svg>
<svg class="a" style="left:1238px;top:98px" width="26" height="26" viewBox="0 0 26 26"><rect x="0.5" y="0.5" width="25" height="25" rx="3.5" fill="#fdfdfd" stroke="#cfcfcf" stroke-width="1"/><path d="M2 25.6 H24" stroke="#c4c4c4" stroke-width="0.8"/><path d="M2.5 5.7 H5 L3.2 3 H5.5 L8.3 5.7 L5.5 8.4 H3.2 L5 5.7" fill="#5e5e9e" stroke="#5e5e9e" stroke-width="0.6"/><rect x="9.2" y="3.4" width="9" height="4.6" fill="#fff" stroke="#2c2c6c" stroke-width="1.2"/><path d="M18.5 5.7 H22.6" stroke="#1e1e5e" stroke-width="1.6"/><path d="M11 10.5 H4.5 V19 H11 M4.5 14.6 H10" fill="none" stroke="#0a4a0a" stroke-width="2.2"/><rect x="11.8" y="11.6" width="10.6" height="10.8" rx="1.8" fill="#8a8ad8"/><rect x="12.8" y="12.4" width="8.8" height="8.8" rx="1.2" fill="#ff4818"/><path d="M13 13 L15 12.6" stroke="#ff8a5a" stroke-width="1"/></svg>
<svg class="a" style="left:1238px;top:128px" width="26" height="26" viewBox="0 0 26 26"><rect x="0.5" y="0.5" width="25" height="25" rx="3.5" fill="#fdfdfd" stroke="#cfcfcf" stroke-width="1"/><path d="M2 25.6 H24" stroke="#c4c4c4" stroke-width="0.8"/><path d="M2.5 5.7 H5 L3.2 3 H5.5 L8.3 5.7 L5.5 8.4 H3.2 L5 5.7" fill="#5e5e9e" stroke="#5e5e9e" stroke-width="0.6"/><rect x="9.2" y="3.4" width="9" height="4.6" fill="#fff" stroke="#2c2c6c" stroke-width="1.2"/><path d="M18.5 5.7 H22.6" stroke="#1e1e5e" stroke-width="1.6"/><path d="M11 10.5 H4.5 V19 H11 M4.5 14.6 H10" fill="none" stroke="#0a4a0a" stroke-width="2.2"/><circle cx="17" cy="17" r="5.6" fill="#7a7ac8"/><circle cx="17" cy="16.8" r="4.7" fill="#5ab0f6"/><circle cx="16" cy="15.6" r="2.2" fill="#bfe4ff"/></svg>
<svg class="a" style="left:1128px;top:158px" width="26" height="26" viewBox="0 0 26 26"><rect x="0.5" y="0.5" width="25" height="25" rx="3.5" fill="#fdfdfd" stroke="#cfcfcf" stroke-width="1"/><path d="M2 25.6 H24" stroke="#c4c4c4" stroke-width="0.8"/><path d="M2.5 5.7 H5 L3.2 3 H5.5 L8.3 5.7 L5.5 8.4 H3.2 L5 5.7" fill="#5e5e9e" stroke="#5e5e9e" stroke-width="0.6"/><rect x="9.2" y="3.4" width="9" height="4.6" fill="#fff" stroke="#2c2c6c" stroke-width="1.2"/><path d="M18.5 5.7 H22.6" stroke="#1e1e5e" stroke-width="1.6"/><path d="M11 11 H6 Q4 11 4 13 V17 Q4 19 6 19 H11" fill="none" stroke="#0a4a0a" stroke-width="2.1"/><rect x="12" y="12" width="10.5" height="10.5" rx="1.5" fill="#d8d8e8" stroke="#7a7ab8" stroke-width="1"/><path d="M17.2 14 L18.4 16 L20.4 17.2 L18.4 18.4 L17.2 20.4 L16 18.4 L14 17.2 L16 16 Z" fill="#000"/></svg>
<svg class="a" style="left:1155px;top:158px" width="26" height="26" viewBox="0 0 26 26"><rect x="0.5" y="0.5" width="25" height="25" rx="3.5" fill="#fdfdfd" stroke="#cfcfcf" stroke-width="1"/><path d="M2 25.6 H24" stroke="#c4c4c4" stroke-width="0.8"/><path d="M2.5 5.7 H5 L3.2 3 H5.5 L8.3 5.7 L5.5 8.4 H3.2 L5 5.7" fill="#5e5e9e" stroke="#5e5e9e" stroke-width="0.6"/><rect x="9.2" y="3.4" width="9" height="4.6" fill="#fff" stroke="#2c2c6c" stroke-width="1.2"/><path d="M18.5 5.7 H22.6" stroke="#1e1e5e" stroke-width="1.6"/><rect x="10.5" y="10" width="4" height="2" fill="#b8b8d0"/><circle cx="12.5" cy="16.5" r="5.2" fill="#b4dcf8" stroke="#a8a8c0" stroke-width="0.8"/><path d="M9.5 13.5 L12.5 16.5 L14.5 14.5" fill="none" stroke="#111" stroke-width="1.3"/></svg>
<svg class="a" style="left:1183px;top:158px" width="26" height="26" viewBox="0 0 26 26"><rect x="0.5" y="0.5" width="25" height="25" rx="3.5" fill="#fdfdfd" stroke="#cfcfcf" stroke-width="1"/><path d="M2 25.6 H24" stroke="#c4c4c4" stroke-width="0.8"/><path d="M2.5 5.7 H5 L3.2 3 H5.5 L8.3 5.7 L5.5 8.4 H3.2 L5 5.7" fill="#5e5e9e" stroke="#5e5e9e" stroke-width="0.6"/><rect x="9.2" y="3.4" width="9" height="4.6" fill="#fff" stroke="#2c2c6c" stroke-width="1.2"/><path d="M18.5 5.7 H22.6" stroke="#1e1e5e" stroke-width="1.6"/><rect x="3" y="15" width="11" height="3.5" fill="#c8a020" stroke="#8a7030" stroke-width="0.7"/><path d="M4 16 H13" stroke="#f0e0a0" stroke-width="0.8"/><rect x="13.5" y="12" width="8" height="9" rx="3" fill="#f0c020" stroke="#8a7a40" stroke-width="0.8"/><rect x="17.5" y="14.5" width="1.5" height="3.5" fill="#c89a10"/></svg>
<svg class="a" style="left:1128px;top:188px" width="26" height="26" viewBox="0 0 26 26"><rect x="0.5" y="0.5" width="25" height="25" rx="3.5" fill="#fdfdfd" stroke="#cfcfcf" stroke-width="1"/><path d="M2 25.6 H24" stroke="#c4c4c4" stroke-width="0.8"/><rect x="4.8" y="7.5" width="17.5" height="11.5" fill="#e8e8fa" stroke="#5e5e9e" stroke-width="1.4"/><path d="M4.8 7.5 L13.55 14 L22.3 7.5 M4.8 19 L10.925 13 M22.3 19 L16.175 13" fill="none" stroke="#6a6aa8" stroke-width="0.9"/><path d="M2.5 3.8 H7.5 V1.2 L11.5 5.2 L7.5 9.2 V6.6 H2.5 Z" fill="#e86a4a" stroke="#a00a0a" stroke-width="1.1"/></svg>
<svg class="a" style="left:1155px;top:188px" width="26" height="26" viewBox="0 0 26 26"><rect x="0.5" y="0.5" width="25" height="25" rx="3.5" fill="#fdfdfd" stroke="#cfcfcf" stroke-width="1"/><path d="M2 25.6 H24" stroke="#c4c4c4" stroke-width="0.8"/><rect x="3.7" y="7.5" width="17.8" height="11.5" fill="#e8e8fa" stroke="#5e5e9e" stroke-width="1.4"/><path d="M3.7 7.5 L12.600000000000001 14 L21.5 7.5 M3.7 19 L9.93 13 M21.5 19 L15.27 13" fill="none" stroke="#6a6aa8" stroke-width="0.9"/></svg>
<svg class="a" style="left:1183px;top:188px" width="26" height="26" viewBox="0 0 26 26"><rect x="0.5" y="0.5" width="25" height="25" rx="3.5" fill="#fdfdfd" stroke="#cfcfcf" stroke-width="1"/><path d="M2 25.6 H24" stroke="#c4c4c4" stroke-width="0.8"/><rect x="2.8" y="7.5" width="17" height="11.5" fill="#e8e8fa" stroke="#5e5e9e" stroke-width="1.4"/><path d="M2.8 7.5 L11.3 14 L19.8 7.5 M2.8 19 L8.75 13 M19.8 19 L13.850000000000001 13" fill="none" stroke="#6a6aa8" stroke-width="0.9"/><path d="M12.5 3.8 H17.5 V1.2 L21.5 5.2 L17.5 9.2 V6.6 H12.5 Z" fill="#7af06a" stroke="#1a9a1a" stroke-width="1.1"/></svg>
<svg class="a" style="left:1128px;top:218px" width="26" height="26" viewBox="0 0 26 26"><rect x="0.5" y="0.5" width="25" height="25" rx="3.5" fill="#fdfdfd" stroke="#cfcfcf" stroke-width="1"/><path d="M2 25.6 H24" stroke="#c4c4c4" stroke-width="0.8"/><path d="M7.5 7.5 H3 V18 H7.5" fill="none" stroke="#3c3c78" stroke-width="1.8"/><path d="M17 7.5 H21.5 V18 H17" fill="none" stroke="#2c2c68" stroke-width="2"/><rect x="7" y="12" width="1.6" height="1.6" fill="#3c3c78"/><rect x="11" y="12" width="1.6" height="1.6" fill="#3c3c78"/><rect x="14" y="12" width="2.4" height="1.6" fill="#3c3c78"/></svg>
<svg class="a" style="left:1155px;top:218px" width="26" height="26" viewBox="0 0 26 26"><rect x="0.5" y="0.5" width="25" height="25" rx="3.5" fill="#fdfdfd" stroke="#cfcfcf" stroke-width="1"/><path d="M2 25.6 H24" stroke="#c4c4c4" stroke-width="0.8"/><path d="M8 3 H3.5 V21.5 H8" fill="none" stroke="#3c3c78" stroke-width="2"/><path d="M16.5 3 H21.5 V21.5 H16.5" fill="none" stroke="#2c2c68" stroke-width="2"/><rect x="7.2" y="6.3" width="1.8" height="1.8" fill="#2c2c68"/><rect x="7.2" y="10.1" width="1.8" height="1.8" fill="#2c2c68"/><rect x="7.2" y="13.899999999999999" width="1.8" height="1.8" fill="#2c2c68"/><rect x="11.0" y="6.3" width="1.8" height="1.8" fill="#2c2c68"/><rect x="11.0" y="10.1" width="1.8" height="1.8" fill="#2c2c68"/><rect x="11.0" y="13.899999999999999" width="1.8" height="1.8" fill="#2c2c68"/><rect x="14.8" y="6.3" width="1.8" height="1.8" fill="#2c2c68"/><rect x="14.8" y="10.1" width="1.8" height="1.8" fill="#2c2c68"/><rect x="14.8" y="13.899999999999999" width="1.8" height="1.8" fill="#2c2c68"/></svg>
<svg class="a" style="left:1183px;top:218px" width="26" height="26" viewBox="0 0 26 26"><rect x="0.5" y="0.5" width="25" height="25" rx="3.5" fill="#fdfdfd" stroke="#cfcfcf" stroke-width="1"/><path d="M2 25.6 H24" stroke="#c4c4c4" stroke-width="0.8"/><path d="M2.5 12.3 H20" stroke="#3c3c78" stroke-width="1.4"/><path d="M19 9.5 L22.5 12.3 L19 15.5 Z" fill="#2c2c68"/><path d="M5 4.5 V19.5" stroke="#e02a2a" stroke-width="1.8"/><path d="M8.8 4.5 V19.5 M12.9 4.5 V19.5 M16.9 4.5 V19.5" stroke="#d83a3a" stroke-width="1"/></svg>
<div class="t" style="left:1130px;top:249.99px;font-size:15.6px;letter-spacing:0.25px;transform:scaleY(0.93);transform-origin:0 13.21px">Type of table:</div>
<div class="a" style="left:1127px;top:270px;width:82px;height:23px;border:1px solid #d9d9d9;border-radius:2px;background:#fdfdfd"></div>
<div class="t" style="left:1131px;top:274.83px;font-size:15.8px;transform:scaleY(0.89);transform-origin:0 13.37px">Normal</div>
<svg class="a" style="left:1195px;top:279px" width="11" height="7" viewBox="0 0 11 7"><path d="M0.5 0.5 L5.5 5.5 L10.5 0.5" fill="none" stroke="#555" stroke-width="1"/></svg>
<svg class="a" style="left:1212px;top:271px" width="26" height="26" viewBox="0 0 26 26"><rect x="0.5" y="0.5" width="25" height="25" rx="3.5" fill="#fdfdfd" stroke="#cfcfcf" stroke-width="1"/><path d="M2 25.6 H24" stroke="#c4c4c4" stroke-width="0.8"/><path d="M6 4 V19 H21" fill="none" stroke="#3c3c78" stroke-width="1.6"/><path d="M3 7.5 L6 3.8 L9 7.5 Z" fill="#5e5e9e"/><path d="M18 16 L21.5 19 L18 22 Z" fill="#3c3c78"/><path d="M8 15.5 L11 11 L12 13 L14 10 L15 12 L18 9.5" fill="none" stroke="#1a9a1a" stroke-width="1.5"/></svg>
<svg class="a" style="left:1239px;top:271px" width="26" height="26" viewBox="0 0 26 26"><rect x="0.5" y="0.5" width="25" height="25" rx="3.5" fill="#fdfdfd" stroke="#cfcfcf" stroke-width="1"/><path d="M2 25.6 H24" stroke="#c4c4c4" stroke-width="0.8"/><path d="M6 4 V20 H20.5" fill="none" stroke="#3c3c78" stroke-width="1.6"/><path d="M3 7.5 L6 3.8 L9 7.5 Z" fill="#5e5e9e"/><path d="M17.5 17 L21 20 L17.5 23 Z" fill="#2c2c68"/><path d="M7.5 11.5 Q9 8 13 7.5 H22.5 L20 10.5 L17.5 11.5 L16 13.5 L7.5 12.5 Z" fill="#3ab02a" stroke="#1a7a1a" stroke-width="0.6"/><rect x="8" y="14" width="3.5" height="4" fill="#5a5a9a"/></svg>
<!-- /ELEMENTS -->

<!-- Library -->
<div class="hdr" style="left:1123px;top:303px;width:144px;height:27px"></div>
<div class="t" style="left:1126px;top:308.60px;font-size:15px;letter-spacing:0.5px;transform:scaleY(0.96);transform-origin:0 12.70px">Library</div>
<div class="a" style="left:1123px;top:330px;width:142px;height:134px;border-left:2px solid #696969;border-top:2px solid #696969;background:#fff"></div>
<div class="a" style="left:1123px;top:469px;width:150px;height:23px;border:1px solid #d9d9d9;border-radius:2px;background:#fbfbfb"></div>
<div class="a" style="left:1123px;top:498px;width:144px;height:488px;border-left:1px solid #6a707a;border-top:1px solid #6a707a;background:#fff"></div>

<!-- bottom -->
<div class="a" style="left:0;top:986px;width:1267px;height:1px;background:#b4b4b4"></div>
<div class="a" style="left:0;top:987px;width:1267px;height:3px;background:#f0f0f0"></div>
<!-- Elements header controls -->
<div class="a" style="left:1239px;top:84px;width:7px;height:1px;background:#000;box-shadow:0 1px 0 #555"></div>
<svg class="a" style="left:1255px;top:78px" width="9" height="9" viewBox="0 0 9 9"><path d="M0.8 0.8 L8.2 8.2 M8.2 0.8 L0.8 8.2" stroke="#000" stroke-width="1"/><rect x="3" y="3" width="3" height="3" fill="#000"/></svg>
<!-- Library header controls -->
<div class="a" style="left:1239px;top:317px;width:7px;height:1px;background:#000;box-shadow:0 1px 0 #555"></div>
<svg class="a" style="left:1255px;top:311px" width="9" height="9" viewBox="0 0 9 9"><path d="M0.8 0.8 L8.2 8.2 M8.2 0.8 L0.8 8.2" stroke="#000" stroke-width="1"/><rect x="3" y="3" width="3" height="3" fill="#000"/></svg>
<svg class="a" style="left:1256px;top:479px" width="11" height="7" viewBox="0 0 11 7"><path d="M0.5 0.5 L5.5 5.5 L10.5 0.5" fill="none" stroke="#555" stroke-width="1"/></svg>
</body></html>
